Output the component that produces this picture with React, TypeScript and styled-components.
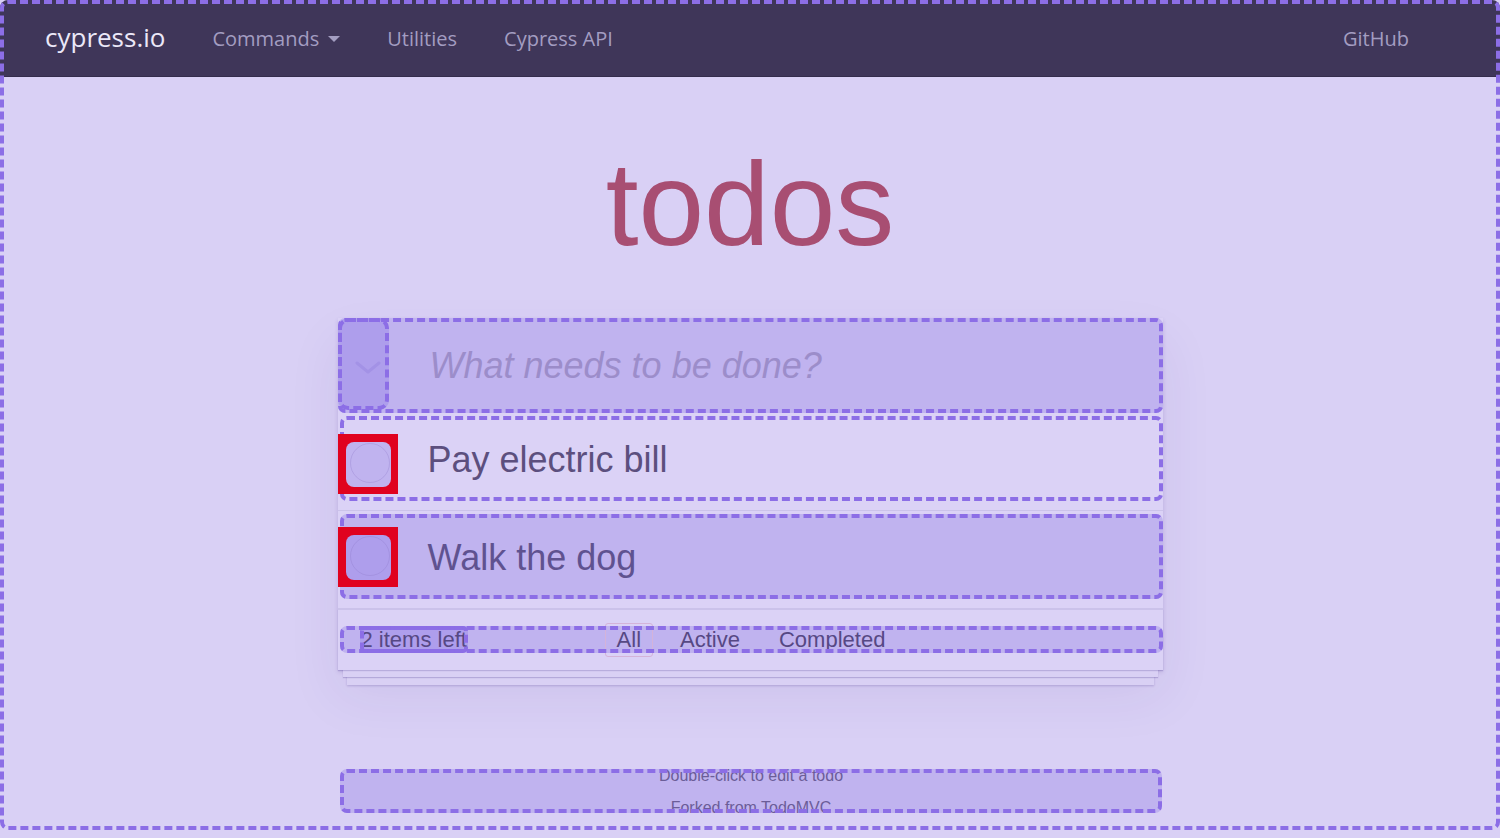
import React from "react";
import styled, { createGlobalStyle, css } from "styled-components";

const GlobalStyle = createGlobalStyle`
  html, body {
    margin: 0;
    padding: 0;
    background: #d9d0f5;
    font-family: "Liberation Sans", Arial, sans-serif;
  }
  * { box-sizing: border-box; }
`;

const DASH = "#8c6ee6";
const FILL = "#c0b3ef";
const FILL_DEEP = "#ae9eec";

const highlight = css`
  outline: 4px dashed ${DASH};
  outline-offset: -4px;
`;

const Page = styled.div`
  height: 830px;
  border-radius: 8px;
  ${highlight}
  overflow: hidden;
`;

const Nav = styled.nav`
  height: 77px;
  background: #3f3659;
  border-bottom: 1px solid #342c4c;
  display: flex;
  align-items: center;
  padding: 0 91px 0 45px;
  font-family: "Open Sans", "Noto Sans", sans-serif;
`;

const Logo = styled.a`
  font-size: 26px;
  color: #ebe8f8;
  text-decoration: none;
  margin-right: 47px;
  line-height: 1;
  padding-bottom: 2px;
`;

const NavList = styled.div`
  display: flex;
  align-items: center;
  gap: 47px;
`;

const NavLink = styled.a<{ $right?: boolean }>`
  font-size: 20px;
  color: #a39dc1;
  text-decoration: none;
  display: flex;
  align-items: center;
  gap: 9px;
  ${(p) => p.$right && "margin-left: auto;"}
`;

const Caret = styled.span`
  width: 0;
  height: 0;
  border-left: 6px solid transparent;
  border-right: 6px solid transparent;
  border-top: 6px solid #a39dc1;
  margin-top: 2px;
`;

const Title = styled.h1`
  margin: 68px 0 55px;
  font-size: 118px;
  line-height: 118px;
  font-weight: normal;
  text-align: center;
  color: #a84e72;
`;

const Card = styled.section`
  width: 825px;
  margin: 0 auto;
  background: #dbd2f6;
  position: relative;
  box-shadow: 0 2px 4px rgba(60, 40, 130, 0.16), 0 25px 50px rgba(60, 40, 130, 0.08);
`;

const NewTodoRow = styled.header`
  height: 95px;
  display: flex;
  align-items: stretch;
  background: ${FILL};
  border-radius: 7px;
  ${highlight}
`;

const ToggleAll = styled.div`
  width: 51px;
  height: 92px;
  flex: none;
  display: flex;
  align-items: center;
  justify-content: center;
  padding: 8px 0 0 10px;
  background: ${FILL_DEEP};
  border-radius: 10px;
  ${highlight}
`;

const NewTodoInput = styled.input`
  flex: 1;
  min-width: 0;
  border: none;
  background: transparent;
  padding: 0 0 0 41px;
  font-family: "Liberation Sans", Arial, sans-serif;
  font-size: 36px;
  color: #5c4f7e;
  outline: none;
  &::placeholder {
    font-style: italic;
    color: #9c8dca;
  }
`;

const TodoList = styled.ul`
  list-style: none;
  margin: 0;
  padding: 0;
`;

const TodoItem = styled.li`
  position: relative;
  padding: 3px 0 9px 2px;
  border-bottom: 1px solid #cbc2ea;
`;

const TodoLabel = styled.label<{ $filled?: boolean }>`
  height: 85px;
  display: flex;
  align-items: center;
  padding: 2px 0 0 88px;
  font-size: 36px;
  color: ${(p) => (p.$filled ? "#5f5290" : "#5c4f7e")};
  background: ${(p) => (p.$filled ? FILL : "transparent")};
  border-radius: 7px;
  ${highlight}
`;

const CheckFrame = styled.span<{ $top: number }>`
  position: absolute;
  left: 0;
  top: ${(p) => p.$top}px;
  width: 60px;
  height: 60px;
  background: #e0021f;
  padding: 8px 7px 7px 8px;
`;

const CheckBox = styled.span<{ $deep?: boolean }>`
  display: flex;
  align-items: center;
  justify-content: center;
  width: 45px;
  height: 45px;
  border-radius: 8px;
  background: ${(p) => (p.$deep ? FILL_DEEP : FILL)};
`;

const CheckRing = styled.span`
  width: 40px;
  height: 40px;
  border-radius: 50%;
  border: 1px solid rgba(140, 120, 200, 0.3);
  margin: -4px -3px 0 0;
`;

const Footer = styled.footer`
  border-top: 1px solid #cbc2ea;
  padding: 16px 0 17px 2px;
  position: relative;
  box-shadow: 0 1px 1px rgba(70, 50, 140, 0.22), 0 12px 0 -5px #d9d0f4,
    0 13px 1px -5px rgba(70, 50, 140, 0.25), 0 24px 0 -9px #d9d0f4,
    0 25px 2px -9px rgba(70, 50, 140, 0.25);
`;

const FooterBar = styled.div`
  height: 27px;
  display: grid;
  grid-template-columns: 1fr auto 1fr;
  align-items: center;
  background: ${FILL};
  border-radius: 7px;
  ${highlight}
  font-size: 22px;
  color: #564884;
`;

const ItemsLeft = styled.span`
  justify-self: start;
  margin-left: 20px;
  height: 27px;
  line-height: 27px;
  padding: 0 1px;
  background: ${FILL_DEEP};
  border-radius: 5px;
  ${highlight}
`;

const Filters = styled.ul`
  list-style: none;
  margin: 0;
  padding: 0;
  height: 27px;
  display: flex;
  align-items: center;
  gap: 15px;
`;

const FilterLink = styled.a<{ $selected?: boolean }>`
  height: 34px;
  display: flex;
  align-items: center;
  padding: 0 11px;
  border: 1px solid ${(p) => (p.$selected ? "#d4b3d9" : "transparent")};
  border-radius: 3px;
  color: #564884;
  text-decoration: none;
`;

const Info = styled.div`
  width: 822px;
  height: 44px;
  margin: 99px auto 0;
  transform: translateX(1px);
  background: ${FILL};
  border-radius: 7px;
  ${highlight}
  display: flex;
  flex-direction: column;
  align-items: center;
  font-size: 16px;
  color: #6b5d98;
`;

const InfoLine = styled.p<{ $gap?: number }>`
  margin: ${(p) => p.$gap ?? 0}px 0 0;
  line-height: 14px;
`;

function Chevron() {
  return (
    <svg width="26" height="14" viewBox="0 0 26 14">
      <polyline
        points="2,2 13,11 24,2"
        fill="none"
        stroke="#a392e6"
        strokeWidth="3"
        strokeLinejoin="round"
        strokeLinecap="round"
      />
    </svg>
  );
}

const todos = [
  { id: 1, text: "Pay electric bill", filled: false, top: 21 },
  { id: 2, text: "Walk the dog", filled: true, top: 16 },
];

export default function App() {
  return (
    <>
      <GlobalStyle />
      <Page>
        <Nav>
          <Logo>cypress.io</Logo>
          <NavList>
            <NavLink>
              Commands <Caret />
            </NavLink>
            <NavLink>Utilities</NavLink>
            <NavLink>Cypress API</NavLink>
          </NavList>
          <NavLink $right>GitHub</NavLink>
        </Nav>
        <Title>todos</Title>
        <Card>
          <NewTodoRow>
            <ToggleAll>
              <Chevron />
            </ToggleAll>
            <NewTodoInput placeholder="What needs to be done?" />
          </NewTodoRow>
          <TodoList>
            {todos.map((t) => (
              <TodoItem key={t.id}>
                <TodoLabel $filled={t.filled}>{t.text}</TodoLabel>
                <CheckFrame $top={t.top}>
                  <CheckBox $deep={t.filled}>
                    <CheckRing />
                  </CheckBox>
                </CheckFrame>
              </TodoItem>
            ))}
          </TodoList>
          <Footer>
            <FooterBar>
              <ItemsLeft>2 items left</ItemsLeft>
              <Filters>
                <li>
                  <FilterLink $selected>All</FilterLink>
                </li>
                <li>
                  <FilterLink>Active</FilterLink>
                </li>
                <li>
                  <FilterLink>Completed</FilterLink>
                </li>
              </Filters>
              <span />
            </FooterBar>
          </Footer>
        </Card>
        <Info>
          <InfoLine>Double-click to edit a todo</InfoLine>
          <InfoLine $gap={18}>Forked from TodoMVC</InfoLine>
        </Info>
      </Page>
    </>
  );
}
